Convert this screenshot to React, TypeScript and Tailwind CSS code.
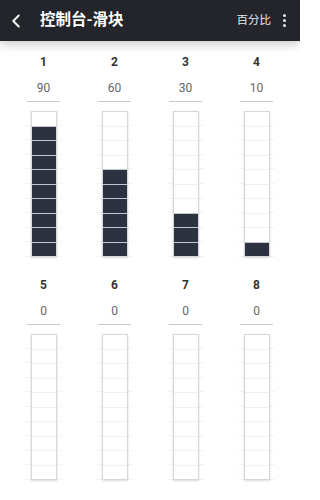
import { ChevronLeft } from 'lucide-react';

const CHANNELS = [
  { id: 1, value: 90 },
  { id: 2, value: 60 },
  { id: 3, value: 30 },
  { id: 4, value: 10 },
  { id: 5, value: 0 },
  { id: 6, value: 0 },
  { id: 7, value: 0 },
  { id: 8, value: 0 },
];

const STEPS = 10;

function Slider({ id, value }: { id: number; value: number }) {
  const filled = Math.round((value / 100) * STEPS);
  return (
    <div className="flex flex-col items-center">
      <div className="h-4 leading-4 text-[12px] font-bold text-[#333]">{id}</div>
      <div className="mt-[10px] h-4 leading-4 text-[12px] text-[#666]">{value}</div>
      <div className="mt-[5px] w-[33px] h-px bg-[#c8c8c8]" />
      <div className="relative mt-[9px] w-[37px] h-[146px]">
        <div className="absolute inset-0 flex flex-col">
          {Array.from({ length: STEPS }).map((_, i) => (
            <div key={i} className="flex-1 border-b border-[#f4f4f4]" />
          ))}
        </div>
        <div className="relative mx-auto w-[26px] h-full border border-[#d6d6d6] bg-white shadow-[0_1px_2px_rgba(0,0,0,0.15)] flex flex-col">
          {Array.from({ length: STEPS }).map((_, i) => {
            const on = STEPS - i <= filled;
            return (
              <div
                key={i}
                className={`flex-1 ${i > 0 ? 'border-t' : ''} ${on ? 'bg-[#2c3240] border-[#c3c6cc]' : 'border-[#efefef]'}`}
              />
            );
          })}
        </div>
      </div>
    </div>
  );
}

export default function App() {
  return (
    <div className="w-[300px] h-[500px] bg-white overflow-hidden font-['Roboto','Noto_Sans_CJK_SC',sans-serif]">
      <div className="relative z-10 h-[41px] bg-[#23252a] flex items-center shadow-[0_3px_10px_rgba(0,0,0,0.22)]">
        <div className="pl-[5px]">
          <ChevronLeft size={22} strokeWidth={2.2} className="text-gray-100" />
        </div>
        <h1 className="ml-[13px] text-[15.5px] font-bold text-white">控制台-滑块</h1>
        <div className="ml-auto text-[11.5px] text-gray-200">百分比</div>
        <div className="ml-[12px] mr-[14px] flex flex-col gap-[2px]">
          <div className="w-[3px] h-[3px] rounded-full bg-gray-200" />
          <div className="w-[3px] h-[3px] rounded-full bg-gray-200" />
          <div className="w-[3px] h-[3px] rounded-full bg-gray-200" />
        </div>
      </div>
      <div className="px-2 pt-[13px] grid grid-cols-4 gap-y-[20px]">
        {CHANNELS.map((c) => (
          <Slider key={c.id} id={c.id} value={c.value} />
        ))}
      </div>
    </div>
  );
}
